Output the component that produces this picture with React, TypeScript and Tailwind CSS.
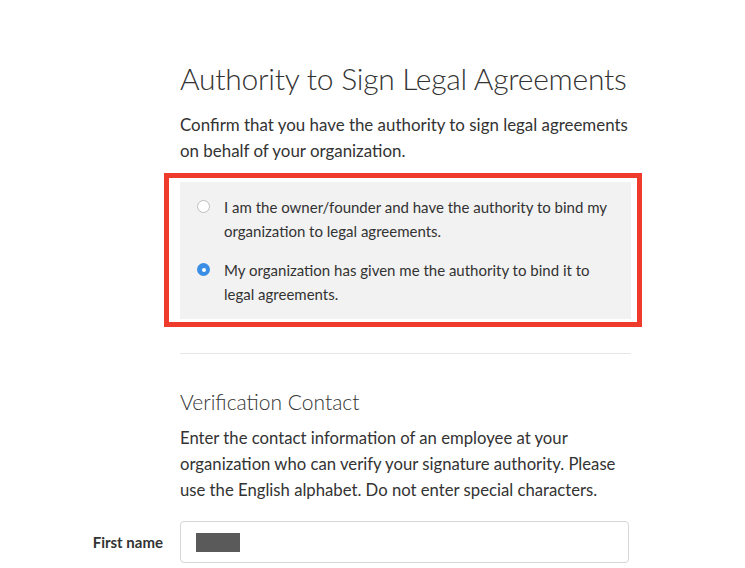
import React from "react";

export default function App() {
  return (
    <div className="min-h-[568px] w-[745px] bg-white text-[#333]" style={{ fontFamily: "Lato, 'Open Sans', sans-serif" }}>
      <div className="grid grid-cols-[180px_451px] pt-[60px]">
        <div />
        <div>
          <h1 className="text-[30px] font-light leading-[36px] tracking-[-0.25px] text-[#333]">
            Authority to Sign Legal Agreements
          </h1>
          <p className="mt-[16px] text-[16.9px] leading-[26px] text-[#333]">
            Confirm that you have the authority to sign legal agreements
            <br />
            on behalf of your organization.
          </p>
          <div className="relative mt-[18px]">
            <div className="flex flex-col gap-[15px] bg-[#f2f2f2] py-[13px] pl-[17px] pr-[10px]">
              <label className="flex items-start gap-[14px] text-[15px] leading-[24px]">
                <span className="mt-[5px] h-[13px] w-[13px] shrink-0 rounded-full border border-[#bdbdbd] bg-white" />
                <span>
                  I am the owner/founder and have the authority to bind my
                  <br />
                  organization to legal agreements.
                </span>
              </label>
              <label className="flex items-start gap-[14px] text-[15px] leading-[24px]">
                <span className="mt-[5px] flex h-[13px] w-[13px] shrink-0 items-center justify-center rounded-full bg-[#3a8ee6]">
                  <span className="h-[4px] w-[4px] rounded-full bg-white" />
                </span>
                <span>
                  My organization has given me the authority to bind it to
                  <br />
                  legal agreements.
                </span>
              </label>
            </div>
            <div className="pointer-events-none absolute left-[-16px] right-[-11px] top-[-9px] bottom-[-8px] border-[5px] border-[#ef3b2c]" />
          </div>
          <div className="mt-[34px] h-px bg-[#e6e6e6]" />
          <h2 className="mt-[34px] text-[21px] font-light leading-[28px] text-[#333]">Verification Contact</h2>
          <p className="mt-[9px] text-[16.7px] leading-[26px] text-[#333]">
            Enter the contact information of an employee at your
            <br />
            organization who can verify your signature authority. Please
            <br />
            use the English alphabet. Do not enter special characters.
          </p>
        </div>
        <div className="mt-[18px] flex items-center justify-end pr-[17px] text-[15px] font-bold text-[#333]">
          First name
        </div>
        <div className="mt-[18px] flex h-[42px] w-[449px] items-center rounded-[4px] border border-[#d6d6d6] bg-white pl-[15px]">
          <span className="h-[19px] w-[44px] bg-[#5a5a5a]" />
        </div>
      </div>
    </div>
  );
}
